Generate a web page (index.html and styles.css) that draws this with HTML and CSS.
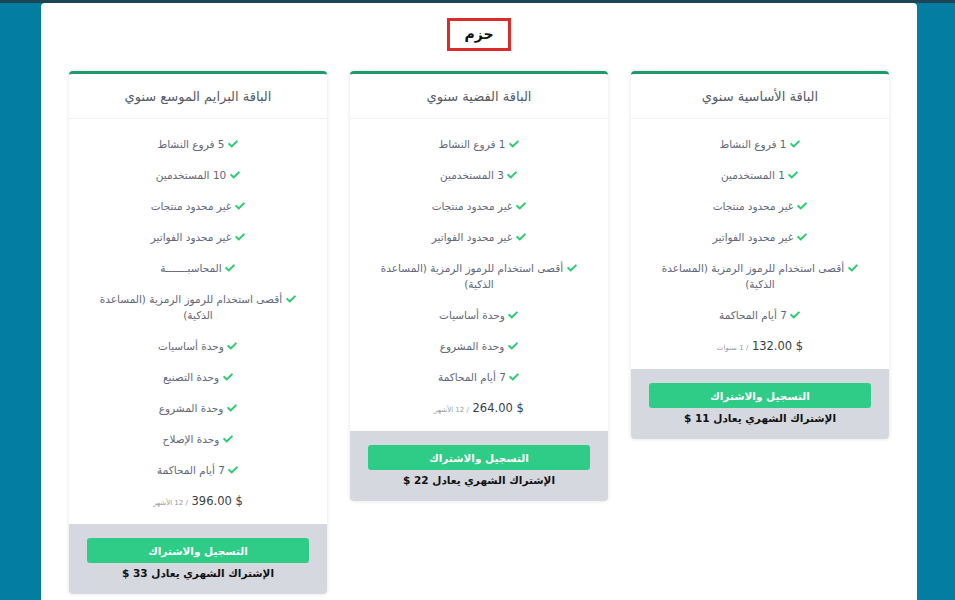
FILE: index.html
```html
<!DOCTYPE html>
<html lang="ar" dir="rtl">
<head>
  <meta charset="UTF-8">
  <meta name="viewport" content="width=device-width, initial-scale=1.0">
  <title>حزم</title>
  <link rel="stylesheet" href="styles.css">
</head>
<body>

<div class="lohe">
  <div class="onwan"><span>حزم</span></div>

  <div class="baqat">

    <div class="baqa">
      <div class="raas">الباقة الأساسية سنوي</div>
      <ul class="mazaya">
        <li><i class="sah"></i>1 فروع النشاط</li>
        <li><i class="sah"></i>1 المستخدمين</li>
        <li><i class="sah"></i>غير محدود منتجات</li>
        <li><i class="sah"></i>غير محدود الفواتير</li>
        <li><i class="sah"></i>أقصى استخدام للرموز الرمزية (المساعدة الذكية)</li>
        <li><i class="sah"></i>7 أيام المحاكمة</li>
        <li class="sier">$ 132.00 <small>/ 1 سنوات</small></li>
      </ul>
      <div class="qadam">
        <button>التسجيل والاشتراك</button>
        <p>الإشتراك الشهري يعادل 11 $</p>
      </div>
    </div>

    <div class="baqa">
      <div class="raas">الباقة الفضية سنوي</div>
      <ul class="mazaya">
        <li><i class="sah"></i>1 فروع النشاط</li>
        <li><i class="sah"></i>3 المستخدمين</li>
        <li><i class="sah"></i>غير محدود منتجات</li>
        <li><i class="sah"></i>غير محدود الفواتير</li>
        <li><i class="sah"></i>أقصى استخدام للرموز الرمزية (المساعدة الذكية)</li>
        <li><i class="sah"></i>وحدة أساسيات</li>
        <li><i class="sah"></i>وحدة المشروع</li>
        <li><i class="sah"></i>7 أيام المحاكمة</li>
        <li class="sier">$ 264.00 <small>/ 12 الأشهر</small></li>
      </ul>
      <div class="qadam">
        <button>التسجيل والاشتراك</button>
        <p>الإشتراك الشهري يعادل 22 $</p>
      </div>
    </div>

    <div class="baqa">
      <div class="raas">الباقة البرايم الموسع سنوي</div>
      <ul class="mazaya">
        <li><i class="sah"></i>5 فروع النشاط</li>
        <li><i class="sah"></i>10 المستخدمين</li>
        <li><i class="sah"></i>غير محدود منتجات</li>
        <li><i class="sah"></i>غير محدود الفواتير</li>
        <li><i class="sah"></i>المحاسبـــــــة</li>
        <li><i class="sah"></i>أقصى استخدام للرموز الرمزية (المساعدة الذكية)</li>
        <li><i class="sah"></i>وحدة أساسيات</li>
        <li><i class="sah"></i>وحدة التصنيع</li>
        <li><i class="sah"></i>وحدة المشروع</li>
        <li><i class="sah"></i>وحدة الإصلاح</li>
        <li><i class="sah"></i>7 أيام المحاكمة</li>
        <li class="sier">$ 396.00 <small>/ 12 الأشهر</small></li>
      </ul>
      <div class="qadam">
        <button>التسجيل والاشتراك</button>
        <p>الإشتراك الشهري يعادل 33 $</p>
      </div>
    </div>

  </div>
</div>

</body>
</html>
```

FILE: styles.css
```css
body {
  margin: 0;
  background: #047da2;
  border-top: 3px solid #1c4656;
  font-family: "DejaVu Sans", "Noto Sans", sans-serif;
}
.lohe {
  background: white;
  width: 876px;
  margin-right: 38px;
  border-radius: 4px 4px 0 0;
  padding: 15px 28px 40px;
  box-sizing: border-box;
}
.onwan { text-align: center; }
.onwan span {
  display: inline-block;
  border: 3px solid #dd2a2a;
  padding: 6px 14px;
  font-size: 14px;
  font-weight: bold;
  color: #111;
  line-height: 15px;
}
.baqat {
  display: flex;
  gap: 23px;
  margin-top: 20px;
  align-items: flex-start;
}
.baqa {
  width: 258px;
  background: white;
  border-top: 3px solid #1d9a69;
  border-radius: 4px;
  box-shadow: 0 0 4px rgba(0,0,0,0.12);
}
.raas {
  height: 44px;
  line-height: 46px;
  text-align: center;
  font-size: 13px;
  color: #555a66;
  border-bottom: 1px solid #f0f0f0;
}
.mazaya {
  list-style: none;
  margin: 0;
  padding: 17px 18px 13px;
  text-align: center;
  font-size: 10.5px;
  line-height: 16px;
  color: #62677a;
}
.mazaya li { margin-bottom: 15px; }
.mazaya li.sier { margin-bottom: 0; font-size: 11.5px; color: #3a3d48; }
.sier small { font-size: 7px; color: #999; }
.sah {
  display: inline-block;
  width: 11px;
  height: 10px;
  margin-left: 3px;
  vertical-align: middle;
  margin-top: -2px;
  background: url("data:image/svg+xml,%3Csvg xmlns='http://www.w3.org/2000/svg' viewBox='0 0 512 512'%3E%3Cpath fill='%232ecc71' d='M173.9 439.4l-166.4-166.4c-10-10-10-26.2 0-36.2l36.2-36.2c10-10 26.2-10 36.2 0L192 312.7 432.1 72.6c10-10 26.2-10 36.2 0l36.2 36.2c10 10 10 26.2 0 36.2l-294.4 294.4c-10 10-26.2 10-36.2 0z'/%3E%3C/svg%3E") no-repeat center / contain;
}
.qadam {
  background: #d5d8df;
  padding: 14px 18px 13px;
  text-align: center;
  border-radius: 0 0 4px 4px;
}
.qadam button {
  display: block;
  width: 100%;
  height: 25px;
  border: none;
  border-radius: 3px;
  background: #2ecc87;
  color: white;
  font-family: inherit;
  font-size: 10.5px;
  font-weight: bold;
}
.qadam p {
  margin: 2px 0 0;
  font-size: 10.5px;
  font-weight: bold;
  line-height: 16px;
  color: #111;
}
```
